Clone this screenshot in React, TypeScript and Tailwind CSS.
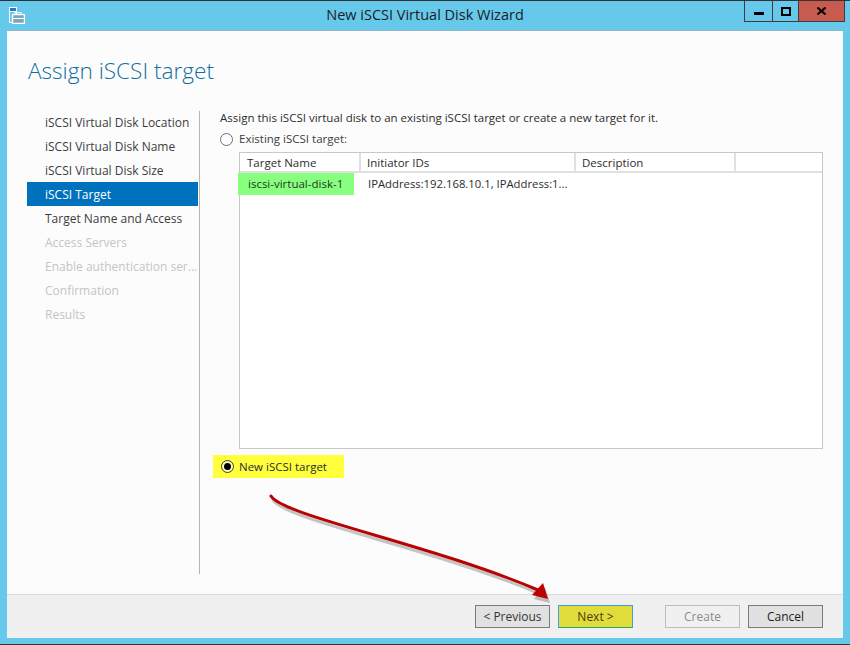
const font = { fontFamily: '"Open Sans", "Noto Sans", sans-serif' }

const steps = [
  { label: "iSCSI Virtual Disk Location", state: "done" },
  { label: "iSCSI Virtual Disk Name", state: "done" },
  { label: "iSCSI Virtual Disk Size", state: "done" },
  { label: "iSCSI Target", state: "active" },
  { label: "Target Name and Access", state: "done" },
  { label: "Access Servers", state: "off" },
  { label: "Enable authentication ser...", state: "off" },
  { label: "Confirmation", state: "off" },
  { label: "Results", state: "off" },
]

const stepStyles: Record<string, string> = {
  done: "text-[#3c3c3c]",
  active: "bg-[#0071bc] text-white",
  off: "text-[#c4c4c4]",
}

function ServerIcon() {
  return (
    <svg width="16" height="17" viewBox="0 0 16 17" fill="none" stroke="white" strokeWidth="1">
      <rect x="0.5" y="0.5" width="7" height="15" fill="#66c9ec" />
      <rect x="0.5" y="0.5" width="7" height="4" fill="#1e7fc0" />
      <rect x="3.5" y="7.5" width="12" height="9" rx="0.8" fill="#7fa6bb" strokeWidth="1.4" />
      <path d="M6 7.5V5.5h6v2M3.5 11.5h12" />
    </svg>
  )
}

function Radio({ checked }: { checked?: boolean }) {
  return (
    <span className={`flex h-[13px] w-[13px] items-center justify-center rounded-full border ${checked ? "border-[#3a3a3a] bg-[#ffffb0]" : "border-[#6e6e6e] bg-white"}`}>
      {checked && <span className="h-[7px] w-[7px] rounded-full bg-black" />}
    </span>
  )
}

function FooterButton({ label, className }: { label: string; className: string }) {
  return (
    <div className={`flex h-[23px] w-[75px] items-center justify-center border text-[12px] ${className}`}>
      {label}
    </div>
  )
}

export default function App() {
  return (
    <div className="relative flex h-[645px] w-[850px] flex-col overflow-hidden bg-[#66c9ec] text-[12px] leading-none text-[#2c2c2c]" style={font}>
      <div className="h-px bg-[#333333]" />

      <div className="relative flex h-[29px] shrink-0 items-start justify-center">
        <div className="absolute left-[9px] top-[6px]">
          <ServerIcon />
        </div>
        <span className="mt-[7px] text-[14.5px] text-[#1d1d1d]">New iSCSI Virtual Disk Wizard</span>
        <div className="absolute right-[5px] top-0 flex h-[21px] border-x border-b border-[#3d3d3d]">
          <div className="flex w-[27px] items-end justify-center pb-[6px]">
            <span className="h-[3px] w-[10px] bg-black" />
          </div>
          <div className="flex w-[26px] items-center justify-center border-l border-[#3d3d3d]">
            <span className="h-[9px] w-[10px] border-2 border-black" />
          </div>
          <div className="flex w-[46px] items-center justify-center border-l border-[#3d3d3d] bg-[#c75b50]">
            <svg width="9" height="8" viewBox="0 0 9 8" stroke="black" strokeWidth="2">
              <path d="M0.5 0.5L8.5 7.5M8.5 0.5L0.5 7.5" />
            </svg>
          </div>
        </div>
      </div>

      <div className="mx-[7px] flex h-[608px] flex-col border-t border-[#8fb3c4] bg-[#fcfcfc]">
        <div className="flex h-[80px] shrink-0 items-start pl-[21px] pt-[25px]">
          <h1 className="text-[22.6px] font-light leading-[30px] text-[#0f6f9e]">Assign iSCSI target</h1>
        </div>

        <div className="flex h-[463px] shrink-0 pl-[20px]">
          <div className="h-full w-[173px] border-r border-[#b5b5b5] pr-px">
            <div className="mt-[-1px]">
              {steps.map((step) => (
                <div key={step.label} className={`flex h-[24px] items-center whitespace-nowrap pl-[18px] pt-[2px] text-[12px] ${stepStyles[step.state]}`}>
                  {step.label}
                </div>
              ))}
            </div>
          </div>

          <div className="flex flex-col pl-[20px]">
            <p className="h-[14px] text-[11.5px] leading-[14px]">
              Assign this iSCSI virtual disk to an existing iSCSI target or create a new target for it.
            </p>
            <div className="mt-[7px] flex h-[14px] items-center gap-[6px]">
              <Radio />
              <span className="text-[11.5px] text-[#3c3c3c]">Existing iSCSI target:</span>
            </div>

            <div className="ml-[19px] mt-[6px] h-[297px] w-[584px] border border-[#c8c8c8] bg-white">
              <div className="flex h-[20px] border-b-2 border-[#e0e0e0] text-[11.5px]">
                <div className="flex w-[121px] items-center border-r-2 border-[#e0e0e0] pl-[7px] pt-[2px]">Target Name</div>
                <div className="flex w-[215px] items-center border-r-2 border-[#e0e0e0] pl-[6px] pt-[2px]">Initiator IDs</div>
                <div className="flex w-[160px] items-center border-r-2 border-[#e0e0e0] pl-[6px] pt-[2px]">Description</div>
              </div>
              <div className="flex h-[21px] items-center text-[11.5px]">
                <div className="ml-[-2px] mr-[8px] flex h-[22px] w-[116px] items-center bg-[#87ff7f] pl-[10px] text-[#1f3a1f]">
                  iscsi-virtual-disk-1
                </div>
                <span className="ml-[6px] whitespace-nowrap text-[11.3px]">IPAddress:192.168.10.1, IPAddress:1...</span>
              </div>
            </div>

            <div className="ml-[-7px] mt-[6px] flex h-[23px] w-[131px] items-center gap-[5px] bg-[#ffff3c] pl-[8px]">
              <Radio checked />
              <span className="text-[11.5px]">New iSCSI target</span>
            </div>
          </div>
        </div>

        <div className="mt-[20px] flex h-[44px] shrink-0 items-start border-t border-[#d9d9d9] bg-[#f0f0f0] pl-[468px] pt-[10px]">
          <FooterButton label="< Previous" className="border-[#7a7a7a] bg-[#e1e1e1] text-[#333333]" />
          <FooterButton label="Next >" className="ml-[8px] border-[#3f9cf0] border-b-[#2fa84f] bg-[#e0dc3c] text-[#4a3a10]" />
          <FooterButton label="Create" className="ml-[32px] border-[#bdbdbd] bg-[#f0f0f0] text-[#8c8c8c]" />
          <FooterButton label="Cancel" className="ml-[8px] border-[#7a7a7a] bg-[#e1e1e1] text-[#1d1d1d]" />
        </div>
      </div>

      <div className="absolute inset-x-0 bottom-0 h-px bg-[#333333]" />

      {/* red annotation arrow */}
      <svg className="absolute left-0 top-0" width="850" height="645" viewBox="0 0 850 645" fill="none">
        <g opacity="0.28" transform="translate(2 4)">
          <path d="M271 496C283 516 430 544 538 590" stroke="#333333" strokeWidth="3" strokeLinecap="round" />
          <path d="M532 595L543 583L548 599Z" fill="#333333" />
        </g>
        <path d="M271 496C283 516 430 544 538 590" stroke="#b80303" strokeWidth="3" strokeLinecap="round" />
        <path d="M532 595L543 583L548 599Z" fill="#c00000" />
      </svg>
    </div>
  )
}
